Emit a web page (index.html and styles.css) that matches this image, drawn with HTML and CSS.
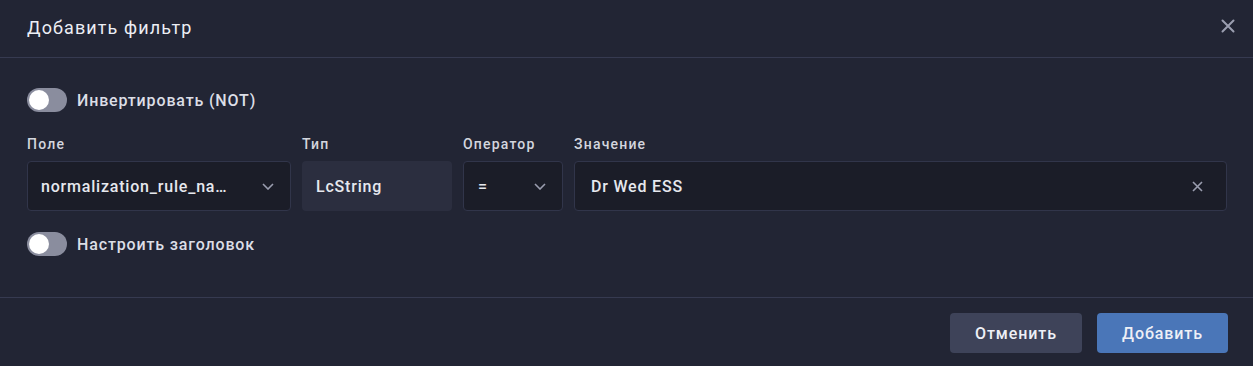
FILE: index.html
```html
<!DOCTYPE html>
<html lang="ru">
<head>
<meta charset="utf-8">
<title>Добавить фильтр</title>
<link rel="stylesheet" href="styles.css">
</head>
<body>
<div class="dialog">
  <header class="dlg-header">
    <h1 class="dlg-title">Добавить фильтр</h1>
    <button class="close-btn" aria-label="Закрыть">
      <svg width="14" height="14" viewBox="0 0 14 14"><path d="M1.5 1.5L12.5 12.5M12.5 1.5L1.5 12.5" stroke="currentColor" stroke-width="2" stroke-linecap="round"/></svg>
    </button>
  </header>
  <main class="dlg-body">
    <label class="switch-row">
      <span class="switch"><span class="knob"></span></span>
      <span class="switch-label">Инвертировать (NOT)</span>
    </label>
    <div class="fields">
      <div class="field">
        <div class="field-label">Поле</div>
        <div class="control select">
          <span class="value">normalization_rule_na…</span>
          <svg class="chev" width="12" height="7" viewBox="0 0 12 7"><path d="M1 1L6 6L11 1" fill="none" stroke="currentColor" stroke-width="1.6"/></svg>
        </div>
      </div>
      <div class="field">
        <div class="field-label">Тип</div>
        <div class="control readonly"><span class="value">LcString</span></div>
      </div>
      <div class="field">
        <div class="field-label">Оператор</div>
        <div class="control select op">
          <span class="value">=</span>
          <svg class="chev" width="12" height="7" viewBox="0 0 12 7"><path d="M1 1L6 6L11 1" fill="none" stroke="currentColor" stroke-width="1.6"/></svg>
        </div>
      </div>
      <div class="field">
        <div class="field-label">Значение</div>
        <div class="control input">
          <span class="value">Dr Wed ESS</span>
          <svg class="clear" width="11" height="11" viewBox="0 0 11 11"><path d="M1 1L10 10M10 1L1 10" stroke="currentColor" stroke-width="1.6"/></svg>
        </div>
      </div>
    </div>
    <label class="switch-row">
      <span class="switch"><span class="knob"></span></span>
      <span class="switch-label">Настроить заголовок</span>
    </label>
  </main>
  <footer class="dlg-footer">
    <button class="btn btn-secondary">Отменить</button>
    <button class="btn btn-primary">Добавить</button>
  </footer>
</div>
</body>
</html>
```
FILE: styles.css
```css
* { box-sizing: border-box; }
html, body {
  margin: 0;
  padding: 0;
  background: #222534;
  font-family: Roboto, "Noto Sans", sans-serif;
  color: #e4e6ee;
}
.dialog {
  width: 1253px;
  height: 366px;
  display: flex;
  flex-direction: column;
}
.dlg-header {
  height: 58px;
  border-bottom: 1px solid #363a50;
  display: flex;
  align-items: center;
  justify-content: space-between;
  padding: 0 18px 0 27px;
}
.dlg-title {
  margin: 0;
  font-size: 18px;
  font-weight: 400;
  letter-spacing: 1.1px;
  color: #eceef4;
  padding-bottom: 2px;
}
.close-btn {
  background: none;
  border: 0;
  color: #9b9eb0;
  padding: 0;
  width: 14px;
  height: 14px;
  display: flex;
  margin-bottom: 6px;
}
.dlg-body {
  padding: 30px 26px 41px 27px;
  display: flex;
  flex-direction: column;
}
.switch-row {
  display: flex;
  align-items: center;
  gap: 10px;
  height: 24px;
}
.switch {
  width: 40px;
  height: 24px;
  border-radius: 12px;
  background: #8a8d9e;
  padding: 2px;
  display: flex;
}
.knob {
  width: 20px;
  height: 20px;
  border-radius: 50%;
  background: #ffffff;
}
.switch-label {
  font-size: 16px;
  font-weight: 500;
  letter-spacing: 0.85px;
  color: #dcdee6;
}
.fields {
  display: grid;
  grid-template-columns: 264px 150px 100px 1fr;
  column-gap: 11px;
  margin: 22px 0 21px;
}
.field-label {
  font-size: 14px;
  font-weight: 500;
  letter-spacing: 1.2px;
  color: #d4d6de;
  line-height: 20px;
  margin-bottom: 7px;
}
.control {
  height: 50px;
  border-radius: 4px;
  display: flex;
  align-items: center;
  padding: 0 12px 0 13px;
  font-size: 16px;
  font-weight: 500;
  letter-spacing: 0.8px;
  color: #e6e8ee;
}
.select, .input {
  background: #1b1d28;
  border: 1px solid #31354a;
}
.op {
  padding-left: 14px;
}
.input {
  padding-left: 16px;
}
.readonly {
  background: #2b2e3f;
  border: 1px solid transparent;
}
.control .value {
  flex: 1;
  white-space: nowrap;
  overflow: hidden;
}
.chev {
  color: #9a9daf;
  margin-right: 4px;
  flex: none;
}
.clear {
  color: #9a9daf;
  margin-right: 11px;
  flex: none;
}
.dlg-footer {
  border-top: 1px solid #363a50;
  display: flex;
  justify-content: flex-end;
  gap: 15px;
  padding: 15px 25px 0 0;
}
.btn {
  height: 40px;
  border: 0;
  border-radius: 4px;
  font-family: Roboto, "Noto Sans", sans-serif;
  font-size: 16px;
  font-weight: 500;
  letter-spacing: 0.9px;
  color: #eef0f6;
  padding: 0;
}
.btn-secondary {
  width: 132px;
  background: #3e4359;
}
.btn-primary {
  width: 131px;
  background: #4a76b8;
}
```
